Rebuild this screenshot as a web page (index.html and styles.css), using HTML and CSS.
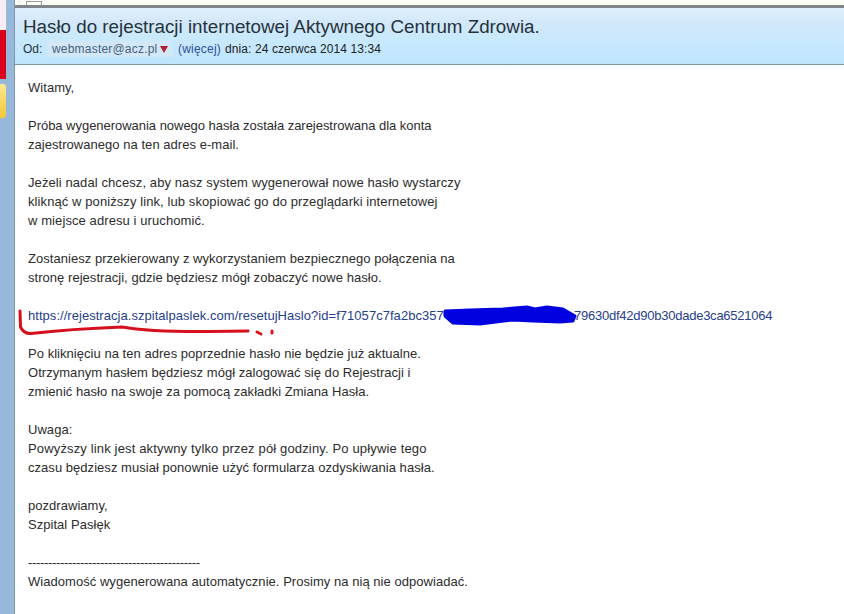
FILE: index.html
```html
<!DOCTYPE html>
<html lang="pl">
<head>
<meta charset="utf-8">
<title>Hasło do rejestracji</title>
<link rel="stylesheet" href="styles.css">
</head>
<body>
<div class="page">
  <aside class="rail">
    <div class="rail-top"></div>
    <div class="rail-red"></div>
    <div class="rail-yellow"></div>
  </aside>
  <main class="mail">
    <div class="topstrip"><span class="dots">::</span><span class="tab"></span></div>
    <header class="head">
      <h1 class="subject">Hasło do rejestracji internetowej Aktywnego Centrum Zdrowia.</h1>
      <div class="meta">
        <span class="od">Od:</span>
        <span class="sender">webmaster@acz.pl<i class="arrow"></i></span>
        <span class="more">(więcej)</span>
        <span class="date">dnia: 24 czerwca 2014 13:34</span>
      </div>
    </header>
    <article class="body">
      <p>Witamy,</p>
      <p><span class="tight">Próba wygenerowania nowego hasła została zarejestrowana dla konta</span><br>zajestrowanego na ten adres e-mail.</p>
      <p class="wide">Jeżeli nadal chcesz, aby nasz system wygenerował nowe hasło wystarczy<br>kliknąć w poniższy link, lub skopiować go do przeglądarki internetowej<br>w miejsce adresu i uruchomić.</p>
      <p>Zostaniesz przekierowany z wykorzystaniem bezpiecznego połączenia na<br>stronę rejestracji, gdzie będziesz mógł zobaczyć nowe hasło.</p>
      <p class="linkrow"><span class="link">https://rejestracja.szpitalpaslek.com/resetujHaslo?id=f71057c7fa2bc357<span class="hidden">000000000000000000</span><span class="tail">79630df42d90b30dade3ca6521064</span></span>
        <svg class="scribble" viewBox="0 0 844 50" width="844" height="50" aria-hidden="true">
          <path class="red" d="M20 15 L20.500 31 Q24 38 31 37.500 Q70 33 122 31 Q150 36 210 35.500 L248 35"/>
          <path class="red" d="M257 36 L261 38"/>
          <path class="red" d="M272 35 L272 37"/>
          <path class="blue" d="M445 15 L470 14 L503 13 L527 11 L535 13 L547 11 L563 13 L575 20 L573 25 L560 26 L533 25 L513 24 L480 28 L453 27 L445 20 Z"/>
        </svg>
      </p>
      <p>Po kliknięciu na ten adres poprzednie hasło nie będzie już aktualne.<br>Otrzymanym hasłem będziesz mógł zalogować się do Rejestracji i<br>zmienić hasło na swoje za pomocą zakładki Zmiana Hasła.</p>
      <p>Uwaga:<br><span class="loose">Powyższy link jest aktywny tylko przez pół godziny. Po upływie tego</span><br>czasu będziesz musiał ponownie użyć formularza ozdyskiwania hasła.</p>
      <p>pozdrawiamy,<br>Szpital Pasłęk</p>
      <p><span class="rule">-------------------------------------------</span><br>Wiadomość wygenerowana automatycznie. Prosimy na nią nie odpowiadać.</p>
    </article>
  </main>
</div>
</body>
</html>
```
FILE: styles.css
```css
* { box-sizing: border-box; }
html, body { margin: 0; padding: 0; height: 100%; overflow: hidden; background: #fff; }
.page { display: flex; width: 844px; height: 614px; font-family: "Liberation Sans", Arial, sans-serif; color: #2a2a2a; }
.rail { width: 15px; flex: none; background: #98b8da; border-right: 1px solid #7d97b2; display: flex; flex-direction: column; }
.rail-top { height: 30px; width: 6px; background: #f6eef4; }
.rail-red { height: 49px; width: 6px; background: #d8001c; }
.rail-yellow { height: 34px; width: 6px; margin-top: 5px; background: linear-gradient(#fbe890, #f2c73a); border-radius: 0 3px 3px 0; }
.mail { flex: 1; min-width: 0; display: flex; flex-direction: column; }
.topstrip { height: 5px; background: #fbfcf6; display: flex; gap: 4px; padding-left: 2px; font-size: 6px; line-height: 5px; color: #888; overflow: hidden; }
.tab { width: 16px; height: 5px; border: 1px solid #999; border-bottom: 0; margin-left: 2px; margin-top: 1px; }
.head { height: 60px; border-top: 3px solid #7c8689; border-bottom: 1px solid #80959f; background: linear-gradient(#e0f0fc 0, #d2e8fa 25%, #c8e9fd 60%, #bde4fd 100%); padding: 8px 0 0 8px; }
.subject { margin: 0; font-size: 18.800px; line-height: 21px; font-weight: 400; color: #27323a; }
.meta { display: flex; align-items: center; font-size: 12px; line-height: 16px; margin-top: 4px; color: #222; }
.od { width: 24px; color: #27323a; }
.sender { color: #47617c; background: #d3e8f6; border-radius: 3px; padding: 0 5px; display: inline-flex; align-items: center; width: 126px; letter-spacing: 0.200px; }
.arrow { display: inline-block; margin-left: 3px; border-left: 4px solid transparent; border-right: 4px solid transparent; border-top: 7px solid #b3202c; }
.more { color: #2f4f9a; margin-right: 4px; margin-left: 5px; letter-spacing: 0.200px; }
.date { letter-spacing: 0.100px; }
.body { padding: 13px 0 0 13px; font-size: 13px; line-height: 19px; letter-spacing: 0.040px; color: #2c2c2c; white-space: nowrap; background: linear-gradient(#f2fbff, #fff 6px); flex: 1; }
.body p { margin: 0 0 19px; }
.body .wide { letter-spacing: 0.090px; }
.tight { letter-spacing: -0.030px; }
.loose { letter-spacing: 0.150px; }
.rule { letter-spacing: -0.333px; }
.linkrow { position: relative; }
.link { color: #27408b; }
.hidden { visibility: hidden; letter-spacing: 0; }
.tail { letter-spacing: -0.240px; }
.scribble { position: absolute; left: -28px; top: -10px; overflow: visible; pointer-events: none; }
.red { fill: none; stroke: #d5101c; stroke-width: 3; stroke-linecap: round; stroke-linejoin: round; }
.blue { fill: #0000e0; stroke: #0000e0; stroke-width: 3; stroke-linejoin: round; }
```
